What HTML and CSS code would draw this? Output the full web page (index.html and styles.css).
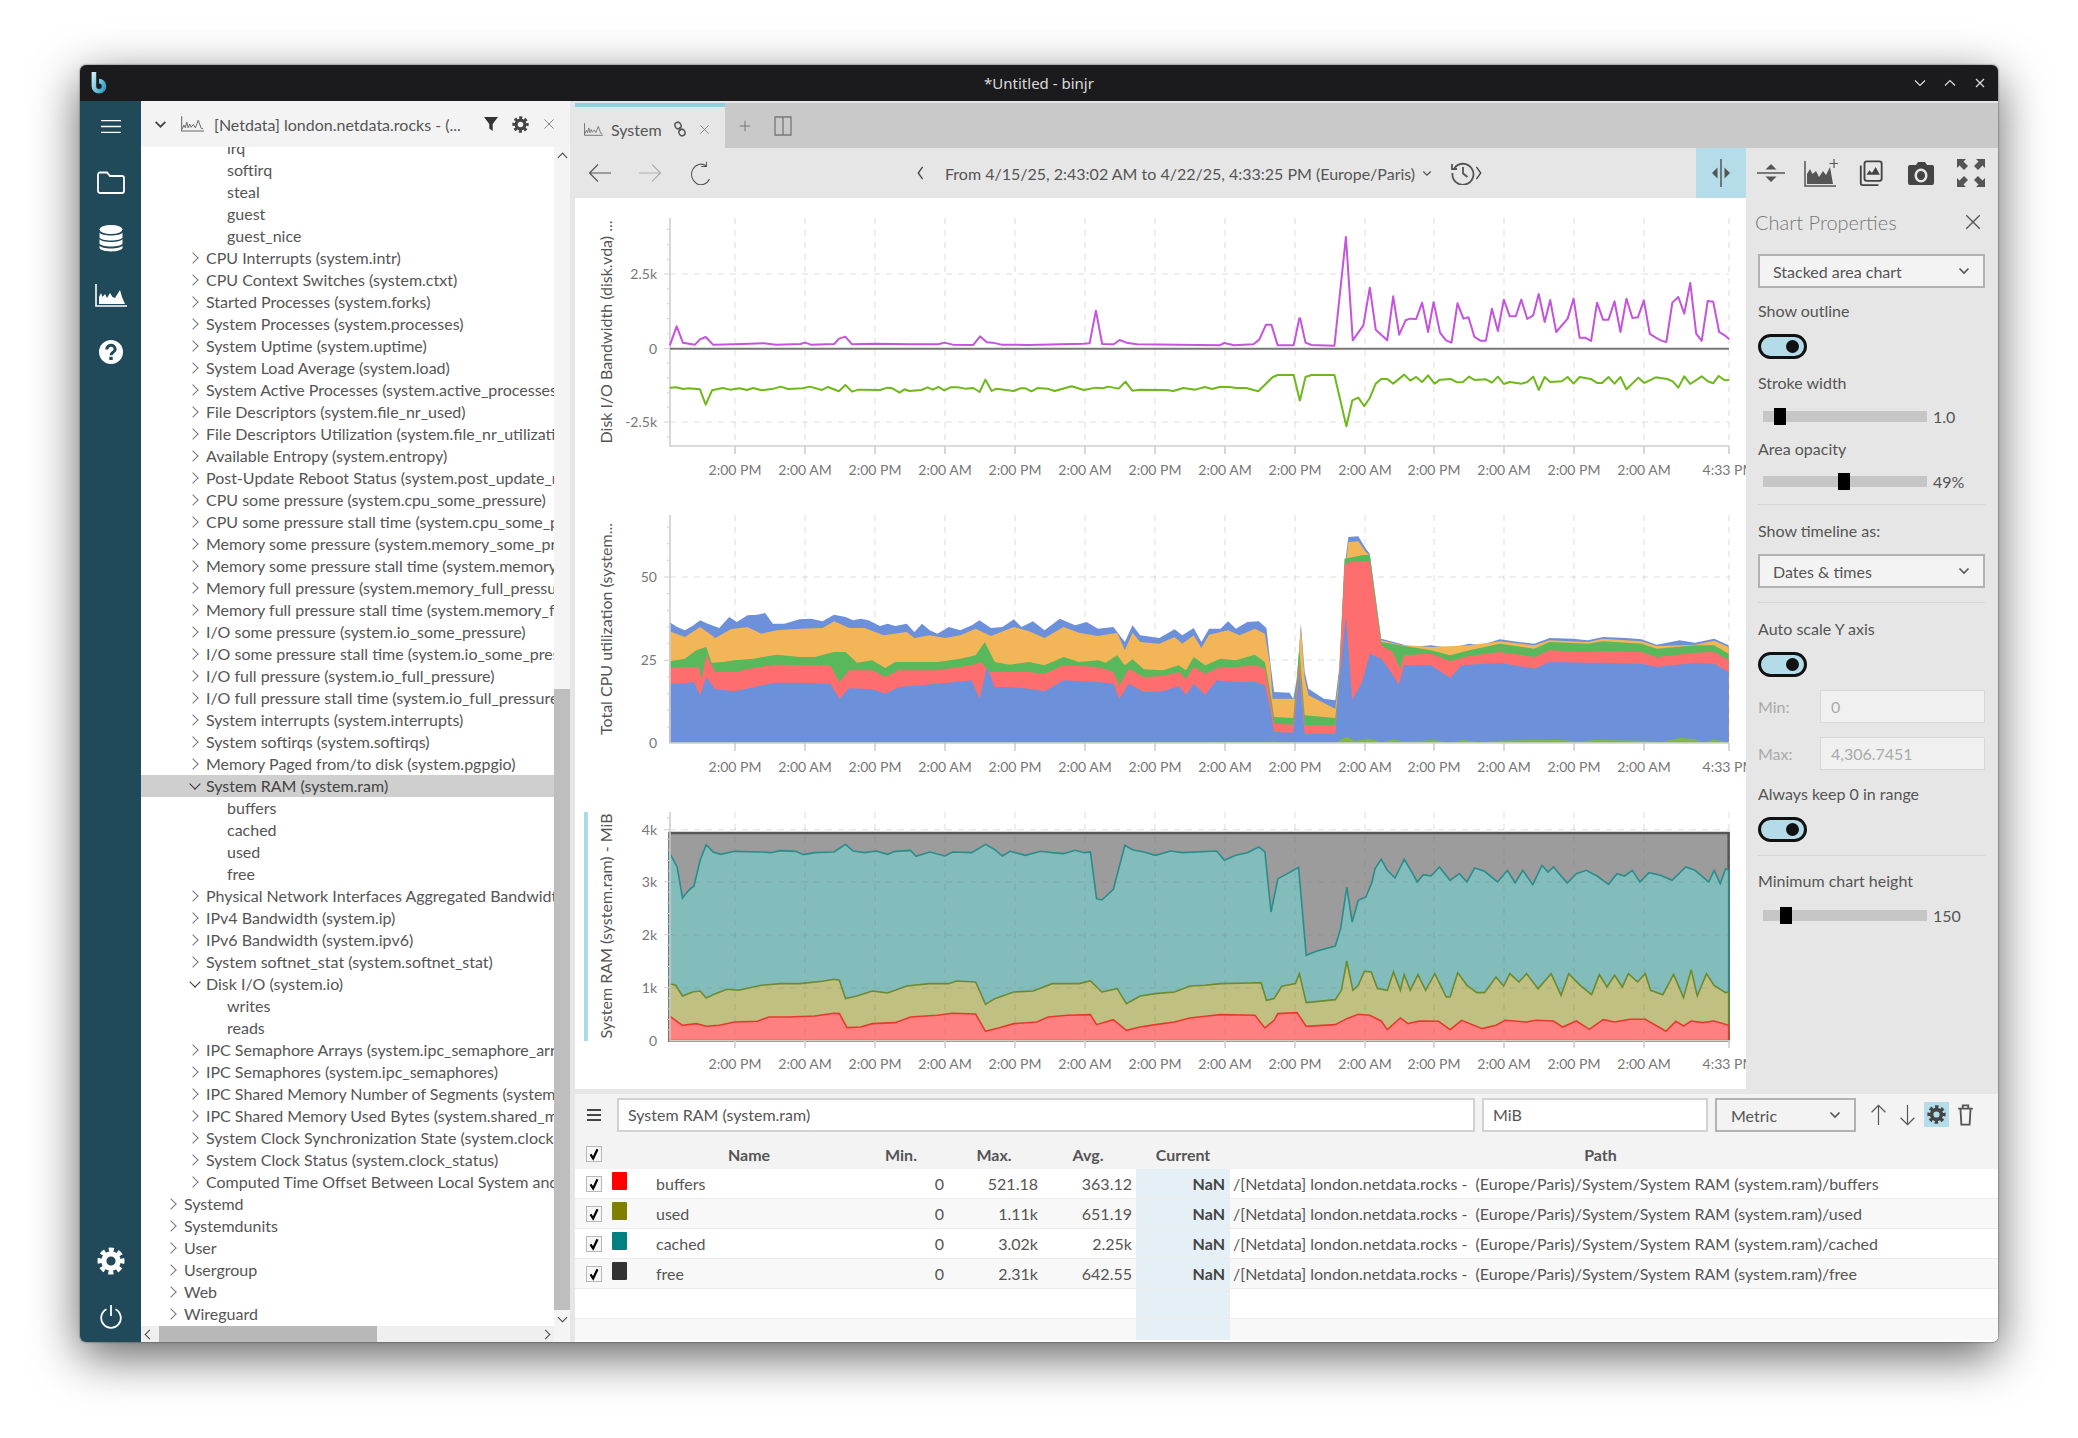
FILE: index.html
```html
<!DOCTYPE html>
<html lang="en">
<head>
<meta charset="utf-8">
<title>binjr</title>
<link rel="stylesheet" href="styles.css">
</head>
<body>
<svg class="sprite" width="0" height="0" aria-hidden="true">
  <defs>
    <symbol id="i-gear" viewBox="0 0 28 28">
      <circle cx="14" cy="14" r="7.2" fill="none" stroke="currentColor" stroke-width="5.2"/>
      <circle cx="14" cy="14" r="11" fill="none" stroke="currentColor" stroke-width="5" stroke-dasharray="4.8 3.84" transform="rotate(-12.5 14 14)"/>
    </symbol>
    <symbol id="i-chart-line" viewBox="0 0 24 16">
      <path d="M.7 0V15.3H24" fill="none" stroke="currentColor" stroke-width="1.1"/>
      <path d="M1.5 13 3 9 4.5 12 6 6 7.5 12 9 8 10.5 11.5 13 8.5 15 12 18 4 21 12.5 23 13" fill="none" stroke="currentColor" stroke-width="1"/>
    </symbol>
    <symbol id="i-chart-fill" viewBox="0 0 32 23">
      <path d="M1 0V22H32" fill="none" stroke="currentColor" stroke-width="1.6"/>
      <path d="M4 20V13L6 9 7.5 13 10 10 12 14 15 9 17.5 13 20 14 25 6 27 13 30 20Z" fill="currentColor"/>
    </symbol>
    <symbol id="i-close" viewBox="0 0 16 16"><path d="M2 2 14 14M14 2 2 14" fill="none" stroke="currentColor" stroke-width="1.2"/></symbol>
    <symbol id="i-filter" viewBox="0 0 16 16"><path d="M1 1H15L9.7 8V15L6.3 12.5V8Z" fill="currentColor"/></symbol>
    <symbol id="i-down" viewBox="0 0 12 8"><path d="M1.5 1.5 6 6 10.5 1.5" fill="none" stroke="currentColor" stroke-width="1.6"/></symbol>
    <symbol id="i-check" viewBox="0 0 16 16"><path d="M4 8.5 7 13 12 2.5" fill="none" stroke="#000" stroke-width="2.6"/></symbol>
    <symbol id="i-arrow" viewBox="0 0 24 24"><path d="M23 12H1.5M10 3.5 1.5 12 10 20.5" fill="none" stroke="currentColor" stroke-width="1.2"/></symbol>
    <symbol id="i-arrow-up" viewBox="0 0 18 24"><path d="M9 23V1.5M1.5 9 9 1.5 16.5 9" fill="none" stroke="currentColor" stroke-width="1.3"/></symbol>
  </defs>
</svg>

<div class="window">
  <header class="titlebar">
    <svg class="logo" viewBox="0 0 18 26"><defs><linearGradient id="lg" x1="0" y1="0" x2="1" y2="1"><stop offset="0" stop-color="#c9f0f7"/><stop offset="1" stop-color="#2d9dc0"/></linearGradient></defs><path d="M3.5 1V16.5A5.5 5.5 0 1 0 9 11" fill="none" stroke="url(#lg)" stroke-width="5"/></svg>
    <span class="title">*Untitled - binjr</span>
    <div class="winctl">
      <svg viewBox="0 0 14 14"><path d="M2 4.5 7 9.5 12 4.5" fill="none" stroke="currentColor" stroke-width="1.2"/></svg>
      <svg viewBox="0 0 14 14"><path d="M2 9.5 7 4.5 12 9.5" fill="none" stroke="currentColor" stroke-width="1.2"/></svg>
      <svg viewBox="0 0 14 14"><path d="M3 3 11 11M11 3 3 11" fill="none" stroke="currentColor" stroke-width="1.2"/></svg>
    </div>
  </header>

  <div class="main">
    <nav class="sidebar">
      <div class="side-btn first"><svg class="ic-menu" viewBox="0 0 20 13"><path d="M0 .7H20M0 6.5H20M0 12.3H20" fill="none" stroke="currentColor" stroke-width="1.3"/></svg></div>
      <div class="side-btn"><svg class="ic-folder" viewBox="0 0 28 23"><path d="M1 3.5A2 2 0 0 1 3 1.5H10L13 5H25A2 2 0 0 1 27 7V20A2 2 0 0 1 25 22H3A2 2 0 0 1 1 20Z" fill="none" stroke="currentColor" stroke-width="1.8"/></svg></div>
      <div class="side-btn"><svg class="ic-db" viewBox="0 0 24 27"><ellipse cx="12" cy="4.5" rx="11.5" ry="4.5" fill="currentColor"/><path d="M.5 7.5C2 11.5 22 11.5 23.500 7.500V12.500C22 16.500 2 16.500 .5 12.500ZM.5 14C2 18 22 18 23.500 14V18.500C22 22.500 2 22.500 .5 18.500ZM.5 20.500C2 24.500 22 24.500 23.500 20.500V23C22 27.500 2 27.500 .5 23Z" fill="currentColor"/></svg></div>
      <div class="side-btn"><svg class="ic-chart"><use href="#i-chart-fill"/></svg></div>
      <div class="side-btn"><svg class="ic-help" viewBox="0 0 24 24"><circle cx="12" cy="12" r="12" fill="#fff"/><path d="M7.800 9.500A4.200 4 0 0 1 16.200 9.200C16.200 12.300 12 12 12 15.200" fill="none" stroke="#20495a" stroke-width="3"/><rect x="10.300" y="16.800" width="3.400" height="3.200" fill="#20495a"/></svg></div>
      <div class="side-spacer"></div>
      <div class="side-btn gear"><svg class="ic-gear"><use href="#i-gear"/></svg></div>
      <div class="side-btn last"><svg class="ic-power" viewBox="0 0 22 24"><path d="M11 0V11M6.500 4.300A9.800 9.800 0 1 0 15.500 4.300" fill="none" stroke="currentColor" stroke-width="1.800"/></svg></div>
    </nav>

    <aside class="tree-pane">
      <div class="tree-head">
        <svg class="th-caret"><use href="#i-down"/></svg>
        <svg class="th-chart"><use href="#i-chart-line"/></svg>
        <span class="th-title">[Netdata] london.netdata.rocks - (...</span>
        <svg class="th-filter"><use href="#i-filter"/></svg>
        <svg class="th-gear"><use href="#i-gear"/></svg>
        <svg class="th-close"><use href="#i-close"/></svg>
      </div>
      <div class="tree-body">
        <div class="tree-list">
          <div class="rows">
            <div class="row leaf">irq</div>
            <div class="row leaf">softirq</div>
            <div class="row leaf">steal</div>
            <div class="row leaf">guest</div>
            <div class="row leaf">guest_nice</div>
            <div class="row lv2">CPU Interrupts (system.intr)</div>
            <div class="row lv2">CPU Context Switches (system.ctxt)</div>
            <div class="row lv2">Started Processes (system.forks)</div>
            <div class="row lv2">System Processes (system.processes)</div>
            <div class="row lv2">System Uptime (system.uptime)</div>
            <div class="row lv2">System Load Average (system.load)</div>
            <div class="row lv2">System Active Processes (system.active_processes)</div>
            <div class="row lv2">File Descriptors (system.file_nr_used)</div>
            <div class="row lv2">File Descriptors Utilization (system.file_nr_utilization)</div>
            <div class="row lv2">Available Entropy (system.entropy)</div>
            <div class="row lv2">Post-Update Reboot Status (system.post_update_reboot_status)</div>
            <div class="row lv2">CPU some pressure (system.cpu_some_pressure)</div>
            <div class="row lv2">CPU some pressure stall time (system.cpu_some_pressure_stall_time)</div>
            <div class="row lv2">Memory some pressure (system.memory_some_pressure)</div>
            <div class="row lv2">Memory some pressure stall time (system.memory_some_pressure_stall_time)</div>
            <div class="row lv2">Memory full pressure (system.memory_full_pressure)</div>
            <div class="row lv2">Memory full pressure stall time (system.memory_full_pressure_stall_time)</div>
            <div class="row lv2">I/O some pressure (system.io_some_pressure)</div>
            <div class="row lv2">I/O some pressure stall time (system.io_some_pressure_stall_time)</div>
            <div class="row lv2">I/O full pressure (system.io_full_pressure)</div>
            <div class="row lv2">I/O full pressure stall time (system.io_full_pressure_stall_time)</div>
            <div class="row lv2">System interrupts (system.interrupts)</div>
            <div class="row lv2">System softirqs (system.softirqs)</div>
            <div class="row lv2">Memory Paged from/to disk (system.pgpgio)</div>
            <div class="row lv2 open selected">System RAM (system.ram)</div>
            <div class="row leaf">buffers</div>
            <div class="row leaf">cached</div>
            <div class="row leaf">used</div>
            <div class="row leaf">free</div>
            <div class="row lv2">Physical Network Interfaces Aggregated Bandwidth (system.net)</div>
            <div class="row lv2">IPv4 Bandwidth (system.ip)</div>
            <div class="row lv2">IPv6 Bandwidth (system.ipv6)</div>
            <div class="row lv2">System softnet_stat (system.softnet_stat)</div>
            <div class="row lv2 open">Disk I/O (system.io)</div>
            <div class="row leaf">writes</div>
            <div class="row leaf">reads</div>
            <div class="row lv2">IPC Semaphore Arrays (system.ipc_semaphore_arrays)</div>
            <div class="row lv2">IPC Semaphores (system.ipc_semaphores)</div>
            <div class="row lv2">IPC Shared Memory Number of Segments (system.shared_memory_segments)</div>
            <div class="row lv2">IPC Shared Memory Used Bytes (system.shared_memory_bytes)</div>
            <div class="row lv2">System Clock Synchronization State (system.clock_sync_state)</div>
            <div class="row lv2">System Clock Status (system.clock_status)</div>
            <div class="row lv2">Computed Time Offset Between Local System and Reference Clock (system.clock_sync_offset)</div>
            <div class="row lv1">Systemd</div>
            <div class="row lv1">Systemdunits</div>
            <div class="row lv1">User</div>
            <div class="row lv1">Usergroup</div>
            <div class="row lv1">Web</div>
            <div class="row lv1">Wireguard</div>
          </div>
          <div class="hscroll"><i class="sb-l"></i><b class="h-thumb"></b><i class="sb-r"></i></div>
        </div>
        <div class="vscroll"><i class="sb-u"></i><b class="v-thumb"></b><i class="sb-d"></i></div>
      </div>
    </aside>

    <section class="workspace">
      <div class="tabbar">
        <div class="tab">
          <svg class="tab-chart"><use href="#i-chart-line"/></svg>
          <span class="tab-label">System</span>
          <svg class="tab-link" viewBox="0 0 14 16"><g fill="none" stroke="currentColor" stroke-width="1.500"><ellipse cx="5" cy="4.500" rx="3" ry="3.300" transform="rotate(-25 5 4.500)"/><ellipse cx="9" cy="11.500" rx="3" ry="3.300" transform="rotate(-25 9 11.500)"/><path d="M6 6.500 8 9.500"/></g></svg>
          <svg class="tab-close"><use href="#i-close"/></svg>
        </div>
        <svg class="tab-plus" viewBox="0 0 14 14"><path d="M7 1V13M1 7H13" fill="none" stroke="currentColor" stroke-width="1.200"/></svg>
        <svg class="tab-split" viewBox="0 0 18 20"><path d="M1 1H17V19H1ZM9 1V19" fill="none" stroke="currentColor" stroke-width="1.300"/></svg>
      </div>

      <div class="toolbar">
        <div class="tb-btn"><svg class="ic24"><use href="#i-arrow"/></svg></div>
        <div class="tb-btn faded"><svg class="ic24 flip"><use href="#i-arrow"/></svg></div>
        <div class="tb-btn"><svg class="ic24" viewBox="0 0 24 28"><path d="M19 5.500A11 12 0 1 0 23 21M13.500 6.500H19.500V1" fill="none" stroke="currentColor" stroke-width="1.200"/></svg></div>
        <div class="range">
          <svg class="rng-nav" viewBox="0 0 8 16"><path d="M7 1 2 8 7 15" fill="none" stroke="currentColor" stroke-width="1.500"/></svg>
          <span class="rng-text">From 4/15/25, 2:43:02 AM to 4/22/25, 4:33:25 PM (Europe/Paris)</span>
          <svg class="rng-caret"><use href="#i-down"/></svg>
          <svg class="rng-hist" viewBox="0 0 24 24"><path d="M3.500 7A10.500 10.500 0 1 1 1.500 12M1 3V8H6M12 6V12.500L16.500 16" fill="none" stroke="currentColor" stroke-width="1.800"/></svg>
          <svg class="rng-nav" viewBox="0 0 8 16"><path d="M1 1 6 8 1 15" fill="none" stroke="currentColor" stroke-width="1.500"/></svg>
        </div>
        <div class="tb-right">
          <div class="tb-btn active"><svg class="ic28" viewBox="0 0 28 28"><path d="M14 0V28" stroke="currentColor" stroke-width="1.500"/><path d="M10.500 8.500V19.500L5 14ZM17.500 8.500V19.500L23 14Z" fill="currentColor"/></svg></div>
          <div class="tb-btn"><svg class="ic28" viewBox="0 0 28 28"><path d="M0 14H28" stroke="currentColor" stroke-width="1.500"/><path d="M8.500 10.500H19.500L14 5ZM8.500 17.500H19.500L14 23Z" fill="currentColor"/></svg></div>
          <div class="tb-btn"><svg class="ic34" viewBox="0 0 34 28"><path d="M1 2V27H32" fill="none" stroke="currentColor" stroke-width="1.500"/><path d="M3 25V15L6 10 8.500 15 12 12 15 18 19 12 22 16 26 8 29 25Z" fill="currentColor"/><path d="M30 0V9M25.500 4.500H34.500" fill="none" stroke="currentColor" stroke-width="1.200"/></svg></div>
          <div class="tb-btn"><svg class="ic26" viewBox="0 0 26 28"><path d="M2 6V25A2 2 0 0 0 4 27H21" fill="none" stroke="currentColor" stroke-width="2"/><rect x="6" y="1.500" width="18.500" height="21" rx="2.500" fill="none" stroke="currentColor" stroke-width="2"/><path d="M8 16 11.500 11 14 14 18 7.500 22.500 16Z" fill="currentColor"/></svg></div>
          <div class="tb-btn"><svg class="ic26" viewBox="0 0 26 24"><path d="M2 4H8L10 1H17L19 4H24A2 2 0 0 1 26 6V22A2 2 0 0 1 24 24H2A2 2 0 0 1 0 22V6A2 2 0 0 1 2 4ZM13 7.500A6.500 7 0 1 0 13.010 7.500ZM13 10A4 4.500 0 1 1 12.990 10Z" fill="currentColor" fill-rule="evenodd"/></svg></div>
          <div class="tb-btn"><svg class="ic28" viewBox="0 0 28 28"><path d="M0 0H9L6.500 2.500 11 7 7 11 2.500 6.500 0 9ZM28 0V9L25.500 6.500 21 11 17 7 21.500 2.500 19 0ZM0 28V19L2.500 21.500 7 17 11 21 6.500 25.500 9 28ZM28 28H19L21.500 25.500 17 21 21 17 25.500 21.500 28 19Z" fill="currentColor"/></svg></div>
        </div>
      </div>

      <div class="center">
        <div class="charts">
          <svg class="chart" viewBox="0 0 1171 297">
            <path class="grid" d="M160 20V248M230 20V248M300 20V248M370 20V248M440 20V248M510 20V248M580 20V248M650 20V248M720 20V248M790 20V248M859 20V248M929 20V248M999 20V248M1069 20V248M1154 20V248M95 76H1154M95 224H1154"/>
            <path class="axis" d="M95 20V248H1154M160 248v8M230 248v8M300 248v8M370 248v8M440 248v8M510 248v8M580 248v8M650 248v8M720 248v8M790 248v8M859 248v8M929 248v8M999 248v8M1069 248v8M1154 248v8"/>
            <path class="ticks" d="M95 31.300h-3M95 46.700h-3M95 61.700h-3M95 76h-6M95 91h-3M95 105.700h-3M95 120.700h-3M95 135.700h-3M95 150.700h-6M95 165h-3M95 180h-3M95 195h-3M95 209h-3M95 224h-6M95 239h-3"/>
            <path class="zero" d="M95 150.700H1154"/>
            <polyline class="ln purple" transform="translate(-5 -106) scale(.4847 .3333)" points="206,760 220,703 233,752 258,758 268,742 280,735 295,758 340,757 400,754 425,758 475,756 485,752 497,758 545,756 555,740 568,734 582,757 630,755 700,757 760,757 772,752 790,758 832,759 846,733 860,751 872,752 890,758 945,759 1060,755 1072,754 1085,656 1098,756 1122,757 1134,744 1148,752 1170,757 1340,760 1350,753 1370,760 1410,757 1422,743 1436,698 1447,698 1460,760 1493,760 1505,677"/>
            <polyline class="ln purple" transform="translate(725 -106) scale(.4591 .3333)" points="0,677 12,752 25,759 75,761 100,435 115,745 138,700 152,587 165,713 190,745 203,613 216,728 230,685 240,680 253,681 266,632 279,720 291,630 305,722 318,745 330,752 343,634 356,680 367,676 380,735 393,746 405,746 418,650 431,717 444,623 457,673 470,673 482,623 495,681 508,670 520,606 533,690 545,624 558,720 583,680 596,620 609,737 621,737 634,747 647,632 660,683 672,683 685,628 698,720 711,620 724,678 736,676 749,625 762,726 775,737 787,746 798,750 811,632 824,615 837,665 850,573 863,725 875,747 888,627 900,629 913,720 925,730 935,742"/>
            <polyline class="ln lime" transform="translate(-5 -106) scale(.4847 .3333)" points="206,887 220,886 233,891 245,889 268,892 280,938 293,895 315,888 330,893 350,889 365,894 378,888 395,895 420,890 435,884 450,891 480,889 495,884 520,894 532,885 555,898 568,879 582,899 595,893 640,894 655,887 665,889 680,902 690,892 700,897 725,894 738,886 748,893 760,885 772,895 785,886 800,886 815,890 832,888 845,900 857,863 870,897 880,890 915,897 930,889 940,889 952,898 965,888 985,890 1000,897 1035,883 1060,894 1085,887 1100,889 1110,884 1132,890 1146,869 1160,896 1175,893 1230,894 1245,897 1265,888 1290,893 1310,885 1325,891 1340,885 1360,885 1375,888 1395,888 1420,898 1450,855 1460,849 1493,849 1506,928"/>
            <polyline class="ln lime" transform="translate(725 -106) scale(.4591 .3333)" points="0,925 12,855 25,849 75,849 101,1003 114,925 127,917 140,943 152,918 165,875 177,861 190,861 203,875 227,848 240,866 253,855 266,870 279,850 293,875 305,863 328,861 342,871 355,870 368,854 380,864 405,862 418,872 431,854 444,876 457,870 483,875 495,870 508,854 520,894 533,855 545,870 570,868 583,855 596,875 609,855 633,861 647,873 658,873 672,855 685,875 698,855 711,892 737,857 750,873 775,856 800,861 812,868 824,887 837,853 850,876 875,853 888,868 900,874 912,852 925,865 935,864"/>
            <text class="ytitle" transform="translate(37 134) rotate(-90)">Disk I/O Bandwidth (disk.vda) ...</text>
            <text class="ylab" x="82" y="81">2.5k</text><text class="ylab" x="82" y="156">0</text><text class="ylab" x="82" y="229">-2.5k</text>
            <g class="xlabs"><text x="160" y="277">2:00 PM</text><text x="230" y="277">2:00 AM</text><text x="300" y="277">2:00 PM</text><text x="370" y="277">2:00 AM</text><text x="440" y="277">2:00 PM</text><text x="510" y="277">2:00 AM</text><text x="580" y="277">2:00 PM</text><text x="650" y="277">2:00 AM</text><text x="720" y="277">2:00 PM</text><text x="790" y="277">2:00 AM</text><text x="859" y="277">2:00 PM</text><text x="929" y="277">2:00 AM</text><text x="999" y="277">2:00 PM</text><text x="1069" y="277">2:00 AM</text><text x="1154" y="277">4:33 PM</text></g>
          </svg>

          <svg class="chart" viewBox="0 0 1171 297">
            <path class="grid" d="M160 20V248M230 20V248M300 20V248M370 20V248M440 20V248M510 20V248M580 20V248M650 20V248M720 20V248M790 20V248M859 20V248M929 20V248M999 20V248M1069 20V248M1154 20V248M95 82H1154M95 165H1154"/>
            <g transform="translate(-5 7) scale(.7653 .3333)">
              <polygon class="c-bluetop" points="130,360 140,375 150,385 160,372 170,355 180,365 195,378 208,345 218,360 232,340 245,338 255,333 265,365 280,365 300,352 315,350 330,358 345,338 360,345 370,355 380,350 390,355 405,372 415,365 425,372 440,365 450,390 460,365 470,385 480,395 495,375 510,385 525,370 535,355 550,378 565,375 580,352 590,375 605,358 620,385 640,350 660,370 675,360 690,380 710,375 725,420 735,370 745,400 770,408 790,382 800,400 815,378 825,420 835,380 850,380 860,358 870,380 885,360 900,358 910,378 915,480 920,570 940,572 945,590 950,530 955,365 960,510 965,560 985,590 1000,595 1005,500 1012,200 1017,105 1030,103 1040,140 1045,155 1060,410 1085,425 1100,435 1125,430 1150,438 1175,425 1190,430 1215,412 1240,420 1260,425 1280,408 1310,410 1330,415 1350,405 1380,408 1400,412 1420,428 1450,415 1470,422 1495,410 1514,430 1514,723 130,723"/>
              <polygon class="c-orange" points="130,388 150,405 170,375 190,408 210,382 232,375 250,395 270,385 300,380 330,378 345,358 365,378 385,378 410,400 440,390 450,408 470,400 490,408 510,400 530,380 550,402 580,375 600,388 620,408 645,375 665,392 690,402 715,392 725,445 735,392 745,420 770,425 790,405 800,425 815,400 825,438 835,398 860,385 875,400 895,380 908,395 915,490 918,590 948,590 955,375 960,530 965,580 1000,620 1005,520 1012,230 1017,120 1030,118 1040,150 1045,160 1060,415 1085,428 1125,435 1175,430 1215,418 1260,430 1280,415 1330,420 1350,410 1400,418 1420,432 1470,428 1495,416 1514,435 1514,723 130,723"/>
              <polygon class="c-green" points="130,478 150,470 165,445 178,435 185,482 200,480 215,475 240,470 270,458 300,465 320,465 345,450 360,450 375,482 395,475 412,498 425,480 450,480 480,480 510,470 530,460 542,420 555,480 575,488 600,480 620,490 645,465 665,480 690,475 700,482 715,460 725,490 735,472 750,502 775,505 795,490 805,505 815,465 830,490 850,470 870,475 895,458 908,480 915,570 920,645 945,648 953,440 960,640 1000,648 1005,530 1012,170 1035,160 1045,158 1060,420 1085,430 1125,445 1150,460 1175,445 1215,425 1260,440 1280,420 1330,425 1350,418 1400,425 1420,440 1470,430 1495,430 1514,455 1514,723 130,723"/>
              <polygon class="c-red" points="130,498 150,495 168,495 172,530 178,460 190,510 215,510 240,498 270,488 300,490 340,490 352,540 365,505 395,505 412,525 430,505 480,505 525,490 537,480 548,510 575,510 600,510 620,515 645,490 690,495 710,510 718,550 730,500 750,525 775,522 795,510 805,530 815,495 830,515 850,495 870,495 895,490 908,500 915,590 920,665 945,668 953,480 960,670 1000,670 1005,540 1012,190 1020,180 1045,178 1060,430 1075,450 1085,500 1090,460 1125,455 1150,478 1175,462 1215,450 1260,465 1280,445 1330,450 1350,448 1400,450 1420,465 1470,452 1495,450 1514,475 1514,723 130,723"/>
              <polygon class="c-blue" points="130,545 150,543 162,540 170,580 178,525 190,562 215,568 240,555 270,542 300,542 340,545 352,590 365,558 395,562 412,575 430,555 480,545 525,535 535,590 545,495 555,555 575,555 600,560 620,568 645,535 690,540 710,545 718,590 730,545 750,570 775,568 795,552 805,578 815,545 830,578 845,535 870,540 895,540 908,550 915,620 920,690 945,692 953,510 960,695 1000,695 1005,540 1014,340 1022,595 1035,540 1045,455 1060,470 1070,500 1083,548 1090,490 1125,490 1135,505 1150,528 1165,490 1215,482 1260,500 1280,480 1330,482 1350,482 1400,485 1420,495 1470,482 1495,485 1514,510 1514,723 130,723"/>
              <polygon class="c-lime" points="130,722 640,722 900,720 920,718 935,722 1000,722 1015,704 1025,717 1045,710 1060,720 1075,713 1090,718 1130,715 1150,722 1165,714 1190,720 1215,716 1290,714 1320,718 1340,714 1400,716 1425,720 1450,708 1470,712 1480,720 1495,714 1514,720 1514,723 130,723"/>
            </g>
            <path class="axis" d="M95 20V248H1154M160 248v8M230 248v8M300 248v8M370 248v8M440 248v8M510 248v8M580 248v8M650 248v8M720 248v8M790 248v8M859 248v8M929 248v8M999 248v8M1069 248v8M1154 248v8"/>
            <path class="ticks" d="M95 32h-3M95 48.700h-3M95 65.300h-3M95 82h-6M95 98.700h-3M95 115.300h-3M95 132h-3M95 148.700h-3M95 165.300h-6M95 182h-3M95 198.700h-3M95 215.300h-3M95 232h-3"/>
            <text class="ytitle" transform="translate(37 134) rotate(-90)">Total CPU utilization (system...</text>
            <text class="ylab" x="82" y="87">50</text><text class="ylab" x="82" y="170">25</text><text class="ylab" x="82" y="253">0</text>
            <g class="xlabs"><text x="160" y="277">2:00 PM</text><text x="230" y="277">2:00 AM</text><text x="300" y="277">2:00 PM</text><text x="370" y="277">2:00 AM</text><text x="440" y="277">2:00 PM</text><text x="510" y="277">2:00 AM</text><text x="580" y="277">2:00 PM</text><text x="650" y="277">2:00 AM</text><text x="720" y="277">2:00 PM</text><text x="790" y="277">2:00 AM</text><text x="859" y="277">2:00 PM</text><text x="929" y="277">2:00 AM</text><text x="999" y="277">2:00 PM</text><text x="1069" y="277">2:00 AM</text><text x="1154" y="277">4:33 PM</text></g>
          </svg>

          <svg class="chart" viewBox="0 0 1171 297">
            <rect class="selbar" x="9" y="20" width="4" height="229"/>
            <g transform="translate(-5 10) scale(.7653 .3333)">
              <polygon class="r-grey" points="130,93 1514,93 1514,716 130,716"/>
              <polygon class="r-teal" points="130,152 140,195 147,288 155,265 162,252 170,175 178,128 187,150 197,157 215,148 250,150 262,152 275,146 295,148 305,158 320,152 345,150 360,127 370,147 385,152 400,147 415,157 425,148 445,145 452,163 470,150 490,162 500,150 525,152 543,127 555,143 565,162 575,148 595,160 615,148 630,152 645,155 660,145 672,152 680,150 688,290 695,294 710,262 725,130 735,143 750,150 765,160 785,147 800,152 845,147 855,175 870,160 885,152 900,135 908,150 916,330 925,230 940,212 952,196 962,460 975,448 1000,432 1007,380 1015,255 1022,360 1030,295 1040,285 1048,240 1052,200 1060,172 1068,205 1078,228 1090,172 1100,210 1107,240 1115,218 1125,222 1136,195 1150,235 1162,215 1172,240 1182,198 1195,208 1212,240 1225,205 1235,243 1245,205 1258,248 1270,190 1278,210 1285,195 1303,243 1315,215 1328,205 1342,222 1357,247 1368,215 1378,222 1388,205 1398,240 1410,212 1425,220 1440,235 1458,195 1470,205 1488,240 1495,205 1503,245 1510,200 1514,205 1514,716 130,716"/>
              <polygon class="r-olive" points="130,545 138,550 147,582 160,570 170,567 178,588 190,575 205,562 220,565 250,550 275,545 300,545 330,538 345,532 352,535 360,590 375,582 395,567 415,573 440,552 470,545 495,545 505,537 530,540 543,607 555,590 580,570 605,567 630,545 665,545 680,537 695,570 715,560 727,605 745,582 765,575 790,570 810,552 830,550 850,545 890,543 903,542 910,595 920,590 930,553 948,545 953,515 962,602 1000,593 1008,565 1015,477 1023,565 1030,550 1038,508 1047,510 1055,560 1068,565 1076,510 1085,565 1090,518 1098,565 1108,518 1118,565 1130,515 1145,585 1150,585 1160,512 1172,550 1185,572 1195,572 1210,525 1220,552 1228,515 1240,540 1250,515 1265,560 1282,515 1295,580 1305,515 1320,550 1335,578 1345,518 1355,555 1365,520 1375,555 1383,515 1395,540 1405,515 1412,565 1428,578 1442,517 1455,587 1465,503 1473,582 1485,515 1495,550 1510,572 1514,570 1514,716 130,716"/>
              <polygon class="r-red" points="130,642 147,670 165,665 178,673 195,670 215,660 245,658 260,645 285,645 320,642 345,634 352,635 362,677 380,675 395,665 425,662 445,645 480,640 500,634 530,636 543,688 560,678 580,665 610,660 625,645 650,640 680,638 688,668 710,653 727,685 745,675 765,668 790,660 810,648 830,643 850,638 895,640 908,678 920,655 925,635 950,632 962,673 1000,668 1015,650 1030,637 1045,640 1060,657 1068,683 1085,648 1095,665 1110,657 1135,658 1150,683 1165,655 1192,680 1210,670 1222,655 1250,660 1262,655 1285,657 1297,675 1315,657 1332,682 1350,653 1365,660 1385,652 1405,652 1432,688 1445,658 1455,672 1465,657 1480,662 1495,657 1514,670 1514,716 130,716"/>
            </g>
            <path class="grid" d="M160 20V248M230 20V248M300 20V248M370 20V248M440 20V248M510 20V248M580 20V248M650 20V248M720 20V248M790 20V248M859 20V248M929 20V248M999 20V248M1069 20V248M1154 20V248M95 37.700H1154M95 90H1154M95 143H1154M95 196H1154"/>
            <path class="axis" d="M95 20V248.700H1154M160 248v8M230 248v8M300 248v8M370 248v8M440 248v8M510 248v8M580 248v8M650 248v8M720 248v8M790 248v8M859 248v8M929 248v8M999 248v8M1069 248v8M1154 248v8"/>
            <path class="ticks" d="M95 26h-3M95 37.700h-6M95 47.300h-3M95 57.900h-3M95 68.500h-3M95 79h-3M95 89.700h-6M95 100.300h-3M95 110.900h-3M95 121.500h-3M95 132h-3M95 142.700h-6M95 153.300h-3M95 163.900h-3M95 174.500h-3M95 185h-3M95 195.700h-6M95 206.300h-3M95 216.900h-3M95 227.500h-3M95 238h-3"/>
            <text class="ytitle" transform="translate(37 134) rotate(-90)">System RAM (system.ram) - MiB</text>
            <text class="ylab" x="82" y="43">4k</text><text class="ylab" x="82" y="95">3k</text><text class="ylab" x="82" y="148">2k</text><text class="ylab" x="82" y="201">1k</text><text class="ylab" x="82" y="254">0</text>
            <g class="xlabs"><text x="160" y="277">2:00 PM</text><text x="230" y="277">2:00 AM</text><text x="300" y="277">2:00 PM</text><text x="370" y="277">2:00 AM</text><text x="440" y="277">2:00 PM</text><text x="510" y="277">2:00 AM</text><text x="580" y="277">2:00 PM</text><text x="650" y="277">2:00 AM</text><text x="720" y="277">2:00 PM</text><text x="790" y="277">2:00 AM</text><text x="859" y="277">2:00 PM</text><text x="929" y="277">2:00 AM</text><text x="999" y="277">2:00 PM</text><text x="1069" y="277">2:00 AM</text><text x="1154" y="277">4:33 PM</text></g>
          </svg>
        </div>

        <aside class="props">
          <div class="props-head"><span>Chart Properties</span><svg><use href="#i-close"/></svg></div>
          <div class="combo top-combo"><span>Stacked area chart</span><svg><use href="#i-down"/></svg></div>
          <div class="plabel m12">Show outline</div>
          <div class="toggle m12"></div>
          <div class="plabel m13">Stroke width</div>
          <div class="slider m11"><div class="track"><b class="thumb" style="left:11px"></b></div><span>1.0</span></div>
          <div class="plabel m11">Area opacity</div>
          <div class="slider m10"><div class="track"><b class="thumb" style="left:75px"></b></div><span>49%</span></div>
          <div class="sep m12"></div>
          <div class="plabel m15">Show timeline as:</div>
          <div class="combo m12"><span>Dates &amp; times</span><svg><use href="#i-down"/></svg></div>
          <div class="sep m14"></div>
          <div class="plabel m15">Auto scale Y axis</div>
          <div class="toggle m12"></div>
          <div class="range-row m13"><label>Min:</label><div class="dis">0</div></div>
          <div class="range-row m14"><label>Max:</label><div class="dis">4,306.7451</div></div>
          <div class="plabel m13">Always keep 0 in range</div>
          <div class="toggle m12"></div>
          <div class="sep m13"></div>
          <div class="plabel m14">Minimum chart height</div>
          <div class="slider m12"><div class="track"><b class="thumb" style="left:17px"></b></div><span>150</span></div>
        </aside>
      </div>

      <div class="divider"></div>

      <div class="details">
        <div class="det-bar">
          <div class="det-menu"><svg viewBox="0 0 14 12"><path d="M0 1H14M0 6H14M0 11H14" stroke="currentColor" stroke-width="2"/></svg></div>
          <div class="field grow">System RAM (system.ram)</div>
          <div class="field unit">MiB</div>
          <div class="combo metric"><span>Metric</span><svg><use href="#i-down"/></svg></div>
          <div class="det-icons">
            <div class="d-ic"><svg><use href="#i-arrow-up"/></svg></div>
            <div class="d-ic"><svg class="flipv"><use href="#i-arrow-up"/></svg></div>
            <div class="d-ic on"><svg><use href="#i-gear"/></svg></div>
            <div class="d-ic"><svg viewBox="0 0 18 24"><path d="M1 5H17M6 5V1.500H12V5M3.500 5 4.500 22.500H13.500L14.500 5" fill="none" stroke="currentColor" stroke-width="2"/></svg></div>
          </div>
        </div>
        <div class="tbl">
          <div class="tr head">
            <div class="cb"><svg><use href="#i-check"/></svg></div><div></div>
            <div class="th">Name</div><div class="th tmin">Min.</div><div class="th tnum">Max.</div><div class="th tnum tavg">Avg.</div><div class="th">Current</div><div class="th tpath">Path</div>
          </div>
          <div class="tr">
            <div class="cb"><svg><use href="#i-check"/></svg></div><div class="sw s-red"></div>
            <div class="td nm">buffers</div><div class="td n">0</div><div class="td n">521.18</div><div class="td n av">363.12</div><div class="td n cur">NaN</div><div class="td pth">/[Netdata] london.netdata.rocks -  (Europe/Paris)/System/System RAM (system.ram)/buffers</div>
          </div>
          <div class="tr">
            <div class="cb"><svg><use href="#i-check"/></svg></div><div class="sw s-olive"></div>
            <div class="td nm">used</div><div class="td n">0</div><div class="td n">1.11k</div><div class="td n av">651.19</div><div class="td n cur">NaN</div><div class="td pth">/[Netdata] london.netdata.rocks -  (Europe/Paris)/System/System RAM (system.ram)/used</div>
          </div>
          <div class="tr">
            <div class="cb"><svg><use href="#i-check"/></svg></div><div class="sw s-teal"></div>
            <div class="td nm">cached</div><div class="td n">0</div><div class="td n">3.02k</div><div class="td n av">2.25k</div><div class="td n cur">NaN</div><div class="td pth">/[Netdata] london.netdata.rocks -  (Europe/Paris)/System/System RAM (system.ram)/cached</div>
          </div>
          <div class="tr">
            <div class="cb"><svg><use href="#i-check"/></svg></div><div class="sw s-dark"></div>
            <div class="td nm">free</div><div class="td n">0</div><div class="td n">2.31k</div><div class="td n av">642.55</div><div class="td n cur">NaN</div><div class="td pth">/[Netdata] london.netdata.rocks -  (Europe/Paris)/System/System RAM (system.ram)/free</div>
          </div>
          <div class="tr blank"><div></div><div></div><div></div><div></div><div></div><div></div><div class="cur"></div><div></div></div>
          <div class="tr blank short"><div></div><div></div><div></div><div></div><div></div><div></div><div class="cur"></div><div></div></div>
        </div>
      </div>
    </section>
  </div>
</div>
</body>
</html>
```

FILE: styles.css
```css
* { box-sizing: border-box; }
html, body { margin: 0; height: 100%; }
body {
  background: #fff;
  padding: 65px 0 0 80px;
  font-family: Lato, "Liberation Sans", sans-serif;
  font-size: 16px;
  color: #555;
  overflow: hidden;
}
.sprite { display: block; width: 0; height: 0; }
.window {
  width: 1918px;
  height: 1277px;
  border-radius: 6px;
  box-shadow: 0 14px 48px rgba(0,0,0,.62), 0 0 2px rgba(0,0,0,.7);
  display: flex;
  flex-direction: column;
  overflow: hidden;
  background: #e6e6e6;
}

/* title bar */
.titlebar {
  height: 36px;
  flex: none;
  background: #1b1b1d;
  display: flex;
  align-items: center;
  position: relative;
}
.logo { width: 18px; height: 24px; margin-left: 10px; }
.title {
  position: absolute;
  left: 0; right: 0;
  text-align: center;
  font-family: "Noto Sans", sans-serif;
  font-size: 15px;
  color: #dcdcdc;
}
.winctl { margin-left: auto; margin-right: 11px; display: flex; gap: 16px; color: #ddd; }
.winctl svg { width: 14px; height: 14px; }

.main { flex: 1; min-height: 0; display: flex; }

/* sidebar */
.sidebar {
  width: 61px;
  flex: none;
  background: #20495a;
  color: #fff;
  display: flex;
  flex-direction: column;
  align-items: center;
}
.side-btn { height: 56.5px; width: 100%; display: flex; align-items: center; justify-content: center; flex: none; }
.side-btn.first { height: 50px; margin-bottom: 3px; }
.side-btn.gear { height: 56px; margin-bottom: 3px; }
.side-btn.last { height: 50px; }
.side-spacer { flex: 1; }
.ic-menu { width: 20px; height: 13px; }
.ic-folder { width: 28px; height: 23px; }
.ic-db { width: 24px; height: 27px; }
.ic-chart { width: 32px; height: 23px; }
.ic-help { width: 24px; height: 24px; }
.ic-gear { width: 28px; height: 28px; }
.ic-power { width: 22px; height: 24px; }

/* tree */
.tree-pane {
  width: 429px;
  flex: none;
  display: flex;
  flex-direction: column;
  background: #fff;
}
.tree-head {
  height: 46px;
  flex: none;
  background: #f3f3f3;
  display: flex;
  align-items: center;
  position: relative;
  color: #444;
}
.th-caret { width: 13px; height: 9px; margin-left: 13px; flex: none; }
.th-chart { width: 23px; height: 16px; margin-left: 14px; flex: none; color: #666; }
.th-title { margin-left: 10px; width: 262px; white-space: nowrap; overflow: hidden; flex: none; color: #555; }
.th-filter { width: 16px; height: 16px; margin-left: 7px; flex: none; color: #333; }
.th-gear { width: 17px; height: 17px; margin-left: 13px; flex: none; color: #444; }
.th-close { width: 12px; height: 12px; margin-left: 14px; flex: none; color: #777; }
.tree-body { flex: 1; min-height: 0; display: flex; }
.tree-list { flex: 1; min-width: 0; display: flex; flex-direction: column; }
.rows { flex: 1; min-height: 0; overflow: hidden; }
.rows .row:first-child { margin-top: -10px; }
.row {
  height: 22px;
  line-height: 22px;
  white-space: nowrap;
  overflow: hidden;
  position: relative;
  color: #555;
}
.row.leaf { padding-left: 86px; }
.row.lv2 { padding-left: 65px; }
.row.lv1 { padding-left: 43px; }
.row.lv2::before, .row.lv1::before {
  content: "";
  position: absolute;
  top: 7px;
  width: 7px;
  height: 7px;
  border-top: 1.6px solid #777;
  border-right: 1.6px solid #777;
  transform: rotate(45deg);
}
.row.lv2::before { left: 48px; }
.row.lv1::before { left: 26px; }
.row.open::before { transform: rotate(135deg); top: 5px; left: 50px; border-color: #333; }
.row.selected { background: #cfcfcf; color: #444; }
.hscroll { height: 16px; flex: none; background: #efefef; display: flex; align-items: center; position: relative; }
.h-thumb { width: 218px; height: 16px; margin-left: 6px; background: #b8b8b8; }
.sb-l, .sb-r, .sb-u, .sb-d { display: block; width: 7px; height: 7px; border-top: 1.6px solid #444; border-right: 1.6px solid #444; flex: none; }
.sb-l { transform: rotate(-135deg); margin-left: 5px; }
.sb-r { transform: rotate(45deg); margin-left: auto; margin-right: 5px; }
.vscroll { width: 16px; flex: none; background: #f4f4f4; display: flex; flex-direction: column; align-items: center; }
.sb-u { transform: rotate(-45deg); margin-top: 7px; }
.sb-d { transform: rotate(135deg); margin-top: 4px; }
.v-thumb { width: 16px; height: 621px; margin-top: 528px; background: #bebebe; }

/* workspace */
.workspace {
  flex: 1;
  min-width: 0;
  margin-left: 5px;
  display: flex;
  flex-direction: column;
  background: #e6e6e6;
}
.tabbar {
  height: 45px;
  flex: none;
  margin-top: 2px;
  background: #c9c9c9;
  display: flex;
  align-items: center;
  color: #777;
}
.tab {
  width: 150px;
  height: 45px;
  flex: none;
  background: #e6e6e6;
  border-top: 4px solid #8fd0dd;
  display: flex;
  align-items: center;
  padding-top: 3px;
}
.tab-chart { width: 19px; height: 13px; margin-left: 9px; color: #666; }
.tab-label { margin-left: 8px; color: #555; }
.tab-link { width: 14px; height: 16px; margin-left: 11px; color: #555; }
.tab-close { width: 11px; height: 11px; margin-left: 12px; color: #777; }
.tab-plus { width: 12px; height: 12px; margin-left: 14px; }
.tab-split { width: 18px; height: 20px; margin-left: 23px; }

.toolbar {
  height: 50px;
  flex: none;
  background: #e6e6e6;
  display: flex;
  align-items: center;
  color: #555;
}
.tb-btn { width: 50px; height: 50px; display: flex; align-items: center; justify-content: center; flex: none; }
.tb-btn.faded { color: #b0b0b0; }
.tb-btn.active { background: #b4dde9; }
.ic24 { width: 24px; height: 24px; }
.ic24.flip, .flip { transform: scaleX(-1); }
.flipv { transform: scaleY(-1); }
.ic26 { width: 26px; height: 26px; }
.ic28 { width: 28px; height: 28px; color: #555; }
.ic34 { width: 34px; height: 28px; color: #555; }
.range { display: flex; align-items: center; margin-left: 191px; }
.rng-nav { width: 8px; height: 14px; color: #444; }
.rng-text { margin-left: 21px; white-space: nowrap; color: #555; }
.rng-caret { width: 10px; height: 7px; margin-left: 7px; color: #555; }
.rng-hist { width: 24px; height: 24px; margin-left: 19px; color: #555; }
.tb-right { margin-left: auto; display: flex; margin-right: 2px; color: #444; }

.center { height: 891px; flex: none; display: flex; }
.charts { width: 1171px; flex: none; background: #fff; display: flex; flex-direction: column; }
.chart { width: 1171px; height: 297px; flex: none; display: block; overflow: hidden; }
.grid { fill: none; stroke: rgba(120,120,120,.25); stroke-width: 1; stroke-dasharray: 6 6; }
.axis { fill: none; stroke: #cfcfcf; stroke-width: 1.6; }
.ticks { fill: none; stroke: #cfcfcf; stroke-width: 1; }
.zero { fill: none; stroke: #777; stroke-width: 2; }
.ln { fill: none; stroke-width: 2; vector-effect: non-scaling-stroke; stroke-linejoin: round; }
.purple { stroke: #c453dd; }
.lime { stroke: #6eb81a; }
.c-bluetop { fill: #6c90da; }
.c-orange { fill: #f2b558; }
.c-green { fill: #59b85c; }
.c-red { fill: #ff6e6e; }
.c-blue { fill: #6c90da; }
.c-lime { fill: #83b83f; }
.r-grey { fill: #9c9c9c; stroke: #555; stroke-width: 2.5; vector-effect: non-scaling-stroke; }
.r-teal { fill: #82bdbc; stroke: #2c8c8c; stroke-width: 1.6; vector-effect: non-scaling-stroke; }
.r-olive { fill: #bfc081; stroke: #6c8a2e; stroke-width: 1.6; vector-effect: non-scaling-stroke; }
.r-red { fill: #ff8080; stroke: #e63a2e; stroke-width: 1.6; vector-effect: non-scaling-stroke; }
.selbar { fill: #a8dcea; }
.ytitle { font-size: 16px; fill: #555; text-anchor: middle; }
.ylab { font-size: 14px; fill: #777; text-anchor: end; }
.xlabs text { font-size: 14px; fill: #777; text-anchor: middle; }

/* properties */
.props { flex: 1; min-width: 0; background: #e6e6e6; padding: 0 13px 0 12px; }
.props-head { height: 48px; display: flex; align-items: center; justify-content: space-between; margin-left: -3px; padding-right: 0; }
.props-head span { font-size: 20px; color: #777; font-weight: 300; }
.props-head svg { width: 18px; height: 18px; color: #555; margin-right: 3px; }
.combo {
  height: 34px;
  background: #f3f3f3;
  border: 2px solid #b2b2b2;
  display: flex;
  align-items: center;
  justify-content: space-between;
  padding: 0 13px;
  color: #555;
}
.combo svg { width: 12px; height: 8px; color: #555; }
.top-combo { margin-top: 8px; }
.plabel { height: 22px; line-height: 22px; color: #555; white-space: nowrap; }
.m10 { margin-top: 10px; } .m11 { margin-top: 11px; } .m12 { margin-top: 12px; } .m13 { margin-top: 13px; } .m14 { margin-top: 14px; } .m15 { margin-top: 15px; }
.toggle {
  width: 49px;
  height: 25px;
  border: 3px solid #111;
  border-radius: 13px;
  background: #b4dce8;
  position: relative;
}
.toggle::after {
  content: "";
  position: absolute;
  right: 5px;
  top: 3px;
  width: 13px;
  height: 13px;
  border-radius: 50%;
  background: #111;
}
.slider { height: 22px; display: flex; align-items: center; padding-left: 5px; }
.track { width: 164px; height: 11px; background: #c6c6c6; position: relative; flex: none; }
.thumb { position: absolute; top: -3px; width: 12px; height: 17px; background: #000; }
.slider span { margin-left: 6px; color: #555; }
.sep { height: 1px; background: #d6d6d6; }
.range-row { display: flex; align-items: center; height: 33px; }
.range-row label { width: 62px; color: #aaa; flex: none; }
.dis { flex: 1; height: 33px; background: #f0f0f0; border: 1px solid #d8d8d8; color: #aaa; padding-left: 10px; line-height: 31px; }

.divider { height: 5px; flex: none; background: #e6e6e6; }

/* details */
.details { flex: 1; min-height: 0; background: #fff; display: flex; flex-direction: column; }
.det-bar {
  height: 45px;
  flex: none;
  background: #f3f3f3;
  display: flex;
  align-items: flex-start;
  padding-top: 4px;
  gap: 7px;
}
.det-menu { width: 35px; height: 34px; display: flex; align-items: center; justify-content: flex-end; padding-right: 9px; color: #444; flex: none; }
.det-menu svg { width: 14px; height: 12px; }
.field { height: 34px; background: #fff; border: 2px solid #d2d2d2; line-height: 30px; padding-left: 9px; color: #555; }
.grow { flex: 1; min-width: 0; }
.unit { width: 226px; flex: none; }
.metric { width: 141px; flex: none; padding: 0 13px 0 14px; }
.det-icons { display: flex; gap: 4px; margin-left: 3px; margin-right: 20px; flex: none; padding-top: 4px; }
.d-ic { width: 25px; height: 25px; display: flex; align-items: center; justify-content: center; color: #555; }
.d-ic svg { width: 17px; height: 22px; }
.d-ic.on { background: #b4dde9; color: #444; }
.d-ic.on svg { width: 19px; height: 19px; }

.tbl { flex: 1; min-height: 0; display: flex; flex-direction: column; }
.tr {
  display: grid;
  grid-template-columns: 37px 28px 218px 86px 94px 98px 94px 1fr;
  height: 30px;
  flex: none;
  align-items: center;
  border-bottom: 1px solid #ececec;
  background: #fff;
}
.tr:nth-child(odd) { background: #f8f8f8; }
.tr.head { background: #f3f3f3; border-bottom: 0; height: 30px; }
.tr.blank { align-items: stretch; }
.tr.short { height: 21px; border-bottom: 0; }
.cb {
  width: 16px;
  height: 16px;
  background: #f6f6f6;
  border: 1px solid #b8b8b8;
  margin-left: 11px;
  display: flex;
}
.cb svg { width: 14px; height: 14px; }
.sw { width: 15px; height: 18px; border-radius: 1px; margin-top: -5px; margin-left: 0; }
.s-red { background: #f00; }
.s-olive { background: #808000; }
.s-teal { background: #008080; }
.s-dark { background: #333; }
.th { font-weight: 700; color: #555; text-align: center; }
.tnum { padding-left: 6px; }
.tavg { padding-right: 4px; }
.tpath { padding-right: 27px; }
.td { color: #555; white-space: nowrap; }
.nm { padding-left: 16px; }
.n { text-align: right; }
.av { padding-right: 4px; }
.cur { background: #e4f0f6; align-self: stretch; }
.td.cur { line-height: 29px; padding-right: 5px; font-weight: 700; color: #444; }
.pth { padding-left: 3px; white-space: pre; }
```
